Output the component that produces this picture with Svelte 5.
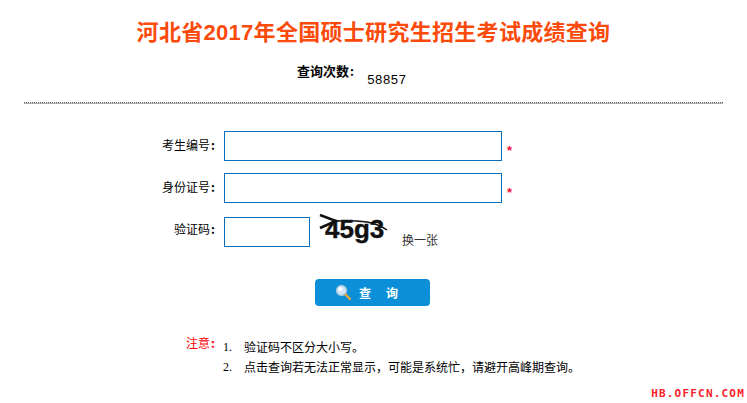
<script>
  const notes = [
    '验证码不区分大小写。',
    '点击查询若无法正常显示\uFF0C可能是系统忙\uFF0C请避开高峰期查询。'
  ];
</script>

<div class="page">
  <h1>河北省2017年全国硕士研究生招生考试成绩查询</h1>
  <div class="count">
    <span class="count-label">查询次数<span class="colon">:</span></span>
    <span class="count-value">58857</span>
  </div>
  <div class="rule"></div>

  <form class="form">
    <label class="lbl" for="a">考生编号<span class="colon">:</span></label>
    <div class="field"><input id="a" class="wide" /><span class="star">*</span></div>
    <label class="lbl" for="b">身份证号<span class="colon">:</span></label>
    <div class="field"><input id="b" class="wide" /><span class="star">*</span></div>
    <label class="lbl" for="c">验证码<span class="colon">:</span></label>
    <div class="field">
      <input id="c" class="short" />
      <span class="captcha">
        <span class="captcha-text">45g3</span>
        <svg class="captcha-lines" width="70" height="34" viewBox="0 0 70 34">
          <path d="M2 3 L18 9 L2 16" fill="none" stroke="#111" stroke-width="2.6" />
          <path d="M18 9 Q34 8 49 10 Q60 12 69 18" fill="none" stroke="#111" stroke-width="1.5" />
        </svg>
      </span>
      <span class="swap">换一张</span>
    </div>
  </form>

  <button class="query" type="button">
    <svg width="16" height="17" viewBox="0 0 16 17">
      <circle cx="6.5" cy="6.5" r="5" fill="#cfe6f7" stroke="#9fc3de" stroke-width="1.4" />
      <circle cx="5.2" cy="5" r="2" fill="#fff" />
      <path d="M10.5 10.5 L15 15" stroke="#eba53a" stroke-width="2.4" stroke-linecap="round" />
    </svg>
    <span class="q1">查</span><span>询</span>
  </button>

  <div class="notes">
    <span class="notes-label">注意<span class="colon">:</span></span>
    <ol>
      {#each notes as note}
        <li>{note}</li>
      {/each}
    </ol>
  </div>

  <div class="site">HB.OFFCN.COM</div>
</div>

<style>
  :global(body) {
    margin: 0;
    background: #fff;
  }
  .page {
    width: 747px;
    height: 403px;
    overflow: hidden;
    font-family: "Liberation Serif", "Noto Sans CJK SC", serif;
    font-size: 12px;
    color: #000;
    display: flex;
    flex-direction: column;
  }
  h1 {
    margin: 17px 0 0;
    height: 32px;
    line-height: 32px;
    text-align: center;
    font-family: "Liberation Sans", "Noto Sans CJK SC", sans-serif;
    font-size: 22px;
    font-weight: 700;
    letter-spacing: 0.3px;
    color: #fb4a0a;
  }
  .count {
    margin-top: 13px;
    height: 26px;
    display: flex;
    padding-left: 297px;
  }
  .count-label {
    font-weight: 700;
    font-size: 13px;
    line-height: 17px;
    width: 70px;
    font-family: "Noto Sans CJK SC", sans-serif;
  }
  .colon {
    display: inline-block;
    width: 6px;
    text-align: center;
    font-weight: 700;
    font-size: 12px;
  }
  .count-value {
    font-family: "Liberation Mono", monospace;
    font-size: 13px;
    line-height: 18px;
    padding-top: 10px;
    letter-spacing: 0.05px;
    color: #000;
  }
  .rule {
    margin: 14px 24px 0;
    width: 699px;
    border-top: 1px dotted #555;
    border-bottom: 1px solid #aaa;
  }
  .form {
    margin: 27px 0 0 120px;
    display: grid;
    grid-template-columns: 96px auto;
    column-gap: 8px;
    row-gap: 12px;
    justify-content: start;
    align-items: start;
  }
  .lbl {
    text-align: right;
    line-height: 17px;
    padding-top: 5px;
    font-family: "Noto Sans CJK SC", sans-serif;
  }
  .field {
    display: flex;
    align-items: flex-start;
    height: 30px;
  }
  input {
    box-sizing: border-box;
    height: 30px;
    border: 1px solid #0a6ebd;
    padding: 0;
    background: #fff;
    outline: none;
  }
  .wide { width: 278px; }
  .short { width: 86px; margin-top: 2px; }
  .star {
    margin: 13px 0 0 5px;
    color: #f3123f;
    font-family: "Liberation Sans", sans-serif;
    font-size: 13px;
    line-height: 13px;
    font-weight: 700;
  }
  .captcha {
    position: relative;
    margin: -3px 0 0 8px;
    width: 70px;
    height: 34px;
    flex: none;
  }
  .captcha-text {
    position: absolute;
    left: 7px;
    top: 2px;
    font-family: "Liberation Sans", sans-serif;
    font-weight: 700;
    font-size: 26px;
    line-height: 30px;
    color: #111;
    white-space: nowrap;
    -webkit-text-stroke: 0.4px #111;
  }
  .captcha-lines {
    position: absolute;
    left: 0;
    top: 0;
  }
  .swap {
    margin: 16px 0 0 14px;
    line-height: 17px;
    color: #333;
    font-family: "Noto Sans CJK SC", sans-serif;
  }
  .query {
    margin: 34px 0 0 315px;
    width: 115px;
    height: 27px;
    border: 0;
    border-radius: 4px;
    padding: 0 12px 0 0;
    background: #0b8fd8;
    color: #fff;
    font-family: "Noto Sans CJK SC", sans-serif;
    font-size: 12px;
    font-weight: 700;
    display: flex;
    align-items: center;
    justify-content: center;
  }
  .query svg { margin-right: 8px; }
  .q1 { margin-right: 15px; }
  .notes {
    margin: 28px 0 0 186px;
    display: flex;
    align-items: flex-start;
  }
  .notes-label {
    color: #f00;
    width: 36px;
    line-height: 17px;
    font-family: "Noto Sans CJK SC", sans-serif;
  }
  ol {
    margin: 4px 0 0;
    padding: 0;
    list-style: none;
    counter-reset: n;
    font-family: "Noto Sans CJK SC", sans-serif;
  }
  li {
    counter-increment: n;
    height: 20px;
    line-height: 18px;
    padding-left: 22px;
    position: relative;
  }
  li::before {
    content: counter(n) ".";
    position: absolute;
    left: 1px;
    font-family: "Liberation Serif", serif;
  }
  .site {
    margin-top: auto;
    padding: 0 2px 4px 0;
    text-align: right;
    font-family: "DejaVu Sans Mono", monospace;
    font-weight: 700;
    font-size: 11px;
    line-height: 10px;
    letter-spacing: 1.2px;
    color: #f7222c;
  }
</style>
